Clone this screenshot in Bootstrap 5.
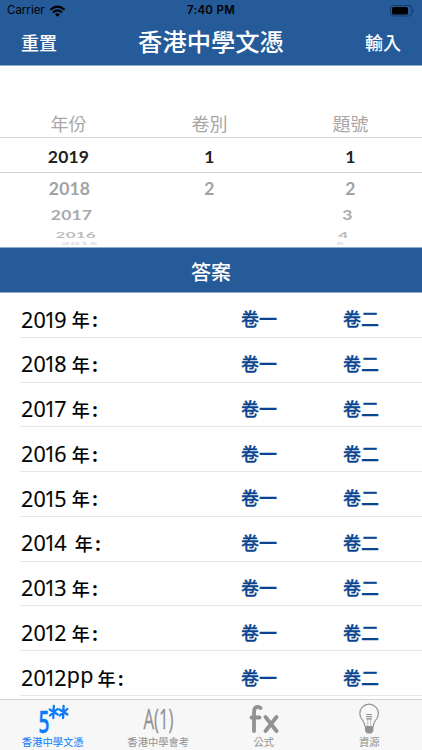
<!DOCTYPE html>
<html lang="zh-Hant">
<head>
<meta charset="utf-8">
<meta name="viewport" content="width=device-width, initial-scale=1">
<title>香港中學文憑</title>
<link href="https://cdn.jsdelivr.net/npm/bootstrap@5.3.0/dist/css/bootstrap.min.css" rel="stylesheet">
<style>
body{font-family:"Inter","Noto Sans CJK TC",sans-serif;width:422px;height:750px;line-height:1;color:#000}
.brand-bg{background:#265b99}
.top-bar{height:66px;border-bottom:1px solid #8fabce}
.status-row{height:22px;font-size:11.5px;padding:0 7px}
.status-row>div{flex:1 1 0}
.clock{font-weight:600;letter-spacing:.3px}
.title-row{height:43px;padding:0 21px 4px}
.title-row a{font-size:18px;font-weight:500;color:#fff;width:50px;margin-top:4px}
.title-row h1{font-size:24.3px;font-weight:500;line-height:36px}
.picker{height:181px;padding-top:42px;font-family:"Lato","Noto Sans CJK TC",sans-serif;font-weight:700;font-size:17.5px;letter-spacing:.2px}
.wheel{display:grid;grid-template-columns:137px 145px 137px;align-items:center;justify-items:center;color:#a7a7a7}
.wheel span{display:block;line-height:20px}
.w-label{height:29px;font-weight:400;font-size:18px;letter-spacing:0;padding-top:3px}
.w-on{height:36px;border:solid #d3d3d3;border-width:1px 0;color:#222;padding-top:3px}
.w-1{height:32px}.w-2{height:22px}.w-3{height:14px}
.w-4{height:6px}
.w-1 span{transform:scaleY(.93);color:#a2a2a2}
.w-1 span:first-child{transform:translateX(1px) scaleY(.93)}
.w-2 span{transform:translateX(3px) scaleY(.74);color:#aaa}
.w-2 span:last-child{transform:translateX(-3px) scaleY(.74)}
.w-3 span{line-height:14px;transform:translate(7px,1px) scale(.97,.46);color:#bcbcbc}
.w-3 span:last-child{transform:translate(-7px,1px) scale(.97,.46)}
.w-4 span{line-height:6px;transform:translateX(11px) scale(.9,.18);color:#dcdcdc}
.w-4 span:last-child{transform:translateX(-10px) scale(.9,.18)}
.answer-head{height:46px;border-top:1px solid #8fabce;border-bottom:1px solid #8fabce;font-size:20px;font-weight:500;padding-top:6px}
.answers{height:406px;margin-left:20px;overflow:hidden}
.answer{height:44.78px;border-bottom:1px solid #e7e7e9;padding:11px 0 0 1px}
.label-box{width:220px;font-size:18px;font-weight:500}
.yr{font-family:"Open Sans",sans-serif;font-size:21.5px;font-weight:500;letter-spacing:.2px;-webkit-text-stroke:.2px #000;margin-top:-2px}
.yr i{font-style:normal;margin:0 -2.4px 0 -1.8px}
.yr b{font-weight:500;position:relative;top:-3px}
.nian{margin:2px 0 0 5px}
.colon{margin-left:2.5px;font:700 19px "Open Sans",sans-serif;line-height:1;margin-top:1px}
.answer a{font-size:18px;font-weight:500;color:#0c458f;width:102px;-webkit-text-stroke:.3px #0c458f}
.tab-bar{height:51px;background:#f7f7f7;border-top:1px solid #d2d2d2}
.tab-bar a{flex:1 1 0;color:#929292;font-size:10.3px;font-weight:400}
.tab-bar a.on{color:#0a7bfb}
.tab-bar svg{display:block;width:50px;height:37px;overflow:visible}
.tab-bar text{fill:currentColor;stroke:currentColor;stroke-linejoin:round}
</style>
<script src="https://cdn.jsdelivr.net/npm/bootstrap@5.3.0/dist/js/bootstrap.bundle.min.js"></script>
</head>
<body class="d-flex flex-column overflow-hidden">
<header class="top-bar brand-bg flex-shrink-0">
 <div class="status-row d-flex align-items-center">
  <div class="d-flex align-items-center gap-1">Carrier
   <svg width="17" height="12" viewBox="0 0 17 12" fill="none" stroke="#000" stroke-width="2.1"><path d="M1.4 4.7Q8.5-1.5 15.6 4.7M4 7.4q4.5-3.9 9 0"/><path d="M8.5 11.7 6 9.2q2.5-2 5 0z" fill="#000" stroke="none"/></svg></div>
  <div class="clock text-center">7:40 PM</div>
  <div class="d-flex justify-content-end">
   <svg width="25" height="12" viewBox="0 0 25 12"><rect x=".5" y=".5" width="21.5" height="10.5" rx="3" fill="none" stroke="#173b67"/><rect x="2" y="2" width="16" height="7.5" rx="1.5"/><path d="M23.3 4q1.6 1.8 0 3.6z" fill="#173b67"/></svg></div>
 </div>
 <div class="title-row d-flex justify-content-between align-items-center">
  <a href="#" class="text-decoration-none">重置</a>
  <h1 class="m-0 text-white">香港中學文憑</h1>
  <a href="#" class="text-decoration-none text-end">輸入</a>
 </div>
</header>
<section class="picker flex-shrink-0">
 <div class="wheel w-label"><span>年份</span><span>卷別</span><span>題號</span></div>
 <div class="wheel w-on"><span>2019</span><span>1</span><span>1</span></div>
 <div class="wheel w-1"><span>2018</span><span>2</span><span>2</span></div>
 <div class="wheel w-2"><span>2017</span><span></span><span>3</span></div>
 <div class="wheel w-3"><span>2016</span><span></span><span>4</span></div>
 <div class="wheel w-4"><span>2015</span><span></span><span>5</span></div>
</section>
<h2 class="answer-head brand-bg text-white m-0 d-flex align-items-center justify-content-center flex-shrink-0">答案</h2>
<main class="answers flex-shrink-0">
 <div class="answer d-flex align-items-center"><div class="label-box d-flex align-items-center flex-shrink-0"><span class="yr">20<i>1</i>9</span><span class="nian">年</span><span class="colon">:</span></div><a href="#" class="text-decoration-none flex-shrink-0">卷一</a><a href="#" class="text-decoration-none flex-shrink-0">卷二</a></div>
 <div class="answer d-flex align-items-center"><div class="label-box d-flex align-items-center flex-shrink-0"><span class="yr">20<i>1</i>8</span><span class="nian">年</span><span class="colon">:</span></div><a href="#" class="text-decoration-none flex-shrink-0">卷一</a><a href="#" class="text-decoration-none flex-shrink-0">卷二</a></div>
 <div class="answer d-flex align-items-center"><div class="label-box d-flex align-items-center flex-shrink-0"><span class="yr">20<i>1</i>7</span><span class="nian">年</span><span class="colon">:</span></div><a href="#" class="text-decoration-none flex-shrink-0">卷一</a><a href="#" class="text-decoration-none flex-shrink-0">卷二</a></div>
 <div class="answer d-flex align-items-center"><div class="label-box d-flex align-items-center flex-shrink-0"><span class="yr">20<i>1</i>6</span><span class="nian">年</span><span class="colon">:</span></div><a href="#" class="text-decoration-none flex-shrink-0">卷一</a><a href="#" class="text-decoration-none flex-shrink-0">卷二</a></div>
 <div class="answer d-flex align-items-center"><div class="label-box d-flex align-items-center flex-shrink-0"><span class="yr">20<i>1</i>5</span><span class="nian">年</span><span class="colon">:</span></div><a href="#" class="text-decoration-none flex-shrink-0">卷一</a><a href="#" class="text-decoration-none flex-shrink-0">卷二</a></div>
 <div class="answer d-flex align-items-center"><div class="label-box d-flex align-items-center flex-shrink-0"><span class="yr">20<i>1</i>4</span><span class="nian ms-2">年</span><span class="colon">:</span></div><a href="#" class="text-decoration-none flex-shrink-0">卷一</a><a href="#" class="text-decoration-none flex-shrink-0">卷二</a></div>
 <div class="answer d-flex align-items-center"><div class="label-box d-flex align-items-center flex-shrink-0"><span class="yr">20<i>1</i>3</span><span class="nian">年</span><span class="colon">:</span></div><a href="#" class="text-decoration-none flex-shrink-0">卷一</a><a href="#" class="text-decoration-none flex-shrink-0">卷二</a></div>
 <div class="answer d-flex align-items-center"><div class="label-box d-flex align-items-center flex-shrink-0"><span class="yr">20<i>1</i>2</span><span class="nian">年</span><span class="colon">:</span></div><a href="#" class="text-decoration-none flex-shrink-0">卷一</a><a href="#" class="text-decoration-none flex-shrink-0">卷二</a></div>
 <div class="answer d-flex align-items-center"><div class="label-box d-flex align-items-center flex-shrink-0"><span class="yr">20<i>1</i>2<b>pp</b></span><span class="nian ms-1">年</span><span class="colon">:</span></div><a href="#" class="text-decoration-none flex-shrink-0">卷一</a><a href="#" class="text-decoration-none flex-shrink-0">卷二</a></div>
</main>
<nav class="tab-bar d-flex flex-shrink-0">
 <a href="#" class="on d-flex flex-column align-items-center text-decoration-none">
  <svg viewBox="0 0 50 37" font-family="Open Sans, sans-serif"><text x="10.500" y="32.500" font-size="30" textLength="11" lengthAdjust="spacingAndGlyphs" font-weight="600" stroke-width=".4">5</text><path d="M25.800 6 25.300 18M21.700 9.500l8 5M29.500 9l-7.500 6.500M35.600 6 35.100 18M31.500 9.500l8 5M39.300 9l-7.500 6.500" fill="none" stroke="currentColor" stroke-width="2.300" stroke-linecap="round"/></svg>香港中學文憑</a>
 <a href="#" class="d-flex flex-column align-items-center text-decoration-none">
  <svg viewBox="0 0 50 37" font-family="Open Sans, sans-serif"><text x="10.500" y="28.500" font-size="28" textLength="30" lengthAdjust="spacingAndGlyphs" font-weight="500" stroke-width=".3">A(1)</text></svg>香港中學會考</a>
 <a href="#" class="d-flex flex-column align-items-center text-decoration-none">
  <svg viewBox="0 0 50 37" fill="none" stroke="currentColor" stroke-width="3.800" stroke-linecap="round" stroke-linejoin="round"><path d="M21.500 8Q15 4.500 15 13V31M12.500 17.500h8M26.500 17l11 14M37.500 17 26.500 31"/></svg>公式</a>
 <a href="#" class="d-flex flex-column align-items-center text-decoration-none">
  <svg viewBox="0 0 50 37" fill="none" stroke="currentColor"><path d="M21 26.500C21 20 15.800 20 15.800 13.500a9.300 9.300 0 0 1 18.600 0C34.400 20 29.200 20 29.200 26.500" stroke-width="1.200"/><path d="M22.300 14.500h5.600M22.300 16.700h5.600M22.300 18.800h5.600" stroke-width="1.200"/><path d="M23.700 19v7.500M26.600 19v7.500" stroke-width=".5"/><path d="M21 26h8.400v5l-2 2.600h-4.400l-2-2.600z" fill="currentColor" stroke="none"/></svg>資源</a>
</nav>
</body>
</html>
